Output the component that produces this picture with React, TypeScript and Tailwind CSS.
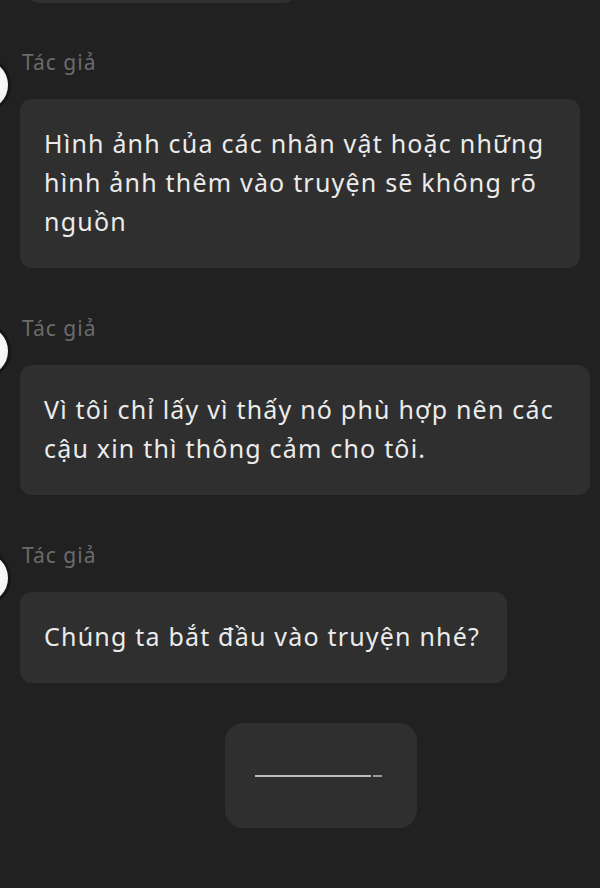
const messages = [
  {
    text: "Hình ảnh của các nhân vật hoặc những hình ảnh thêm vào truyện sẽ không rõ nguồn",
    width: "w-[560px]",
  },
  {
    text: "Vì tôi chỉ lấy vì thấy nó phù hợp nên các cậu xin thì thông cảm cho tôi.",
    width: "w-[570px]",
  },
  {
    text: "Chúng ta bắt đầu vào truyện nhé?",
    width: "w-[487px]",
  },
];

const Avatar = () => (
  <div className="-ml-[45px] mt-[9px] h-[56px] w-[56px] shrink-0 rounded-full border-[3px] border-[#161616] bg-[radial-gradient(circle_at_65%_45%,#ffffff_0%,#f2f2f2_45%,#bcbcbc_85%,#8a8a8a_100%)]" />
);

const Message = ({ text, width }: { text: string; width: string }) => (
  <div className="flex gap-[9px]">
    <Avatar />
    <div className="flex flex-col">
      <div className="ml-[2px] text-[21px] leading-[28px] tracking-[1px] text-[#6b6b6b]">Tác giả</div>
      <div
        className={`mt-[23px] ${width} rounded-[12px] bg-[#2f2f2f] pb-[27px] pl-[24px] pr-[20px] pt-[25px] text-[25px] leading-[39px] tracking-[1.2px] text-[#ebebeb]`}
      >
        {text}
      </div>
    </div>
  </div>
);

export default function App() {
  return (
    <div className="h-[888px] w-[600px] overflow-hidden bg-[#212121] font-['Noto_Sans',sans-serif]">
      <div className="-mt-[37px] ml-[27px] h-[40px] w-[269px] rounded-[12px] bg-[#2f2f2f]" />
      <div className="mt-[45px] flex flex-col gap-[46px]">
        {messages.map((m, i) => (
          <Message key={i} text={m.text} width={m.width} />
        ))}
      </div>
      <div className="ml-[225px] mt-[40px] flex h-[105px] w-[192px] items-center justify-center rounded-[18px] bg-[#2f2f2f]">
        <div className="flex items-center gap-[2px] pr-[6px]">
          <div className="h-[2px] w-[116px] bg-[#bdbdbd]" />
          <div className="h-[2px] w-[9px] bg-[#9a9a9a]" />
        </div>
      </div>
    </div>
  );
}
